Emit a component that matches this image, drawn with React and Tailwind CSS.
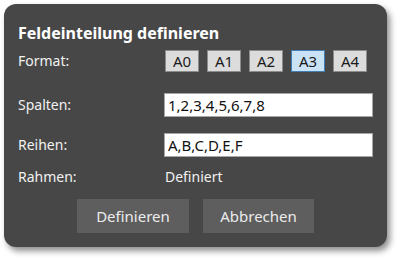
import React, { useState } from 'react'

const formats = ['A0', 'A1', 'A2', 'A3', 'A4']

export default function App() {
  const [format, setFormat] = useState('A3')
  const [spalten, setSpalten] = useState('1,2,3,4,5,6,7,8')
  const [reihen, setReihen] = useState('A,B,C,D,E,F')

  return (
    <div className="w-[400px] h-[260px] bg-white pt-[4px] pl-[4px]" style={{ fontFamily: '"Noto Sans", "Open Sans", sans-serif' }}>
      <div className="w-[383px] h-[243px] rounded-[12px] bg-[#474747] shadow-[3px_4px_6px_rgba(0,0,0,0.45)] pl-[14px] pr-[14px] pt-[18px] text-[#f2f2f2]">
        {/* Title */}
        <h1 className="text-[16px] leading-[22px] font-bold text-white">Feldeinteilung definieren</h1>

        {/* Format */}
        <div className="flex items-center mt-[6px] h-[22px]">
          <div className="w-[147px] text-[14px] leading-[18px]">Format:</div>
          <div className="flex gap-[8px]">
            {formats.map(f => (
              <button
                key={f}
                onClick={() => setFormat(f)}
                className={`w-[34px] h-[22px] border text-[15px] leading-[18px] text-[#1a1a1a] flex items-center justify-center ${f === format ? 'bg-[#c9e2f5] border-[#3f7fb5]' : 'bg-[#dcdcdc] border-[#8c8c8c]'}`}
              >
                {f}
              </button>
            ))}
          </div>
        </div>

        {/* Spalten */}
        <div className="flex items-center mt-[21px] h-[24px]">
          <div className="w-[147px] text-[14px] leading-[18px]">Spalten:</div>
          <input
            value={spalten}
            onChange={e => setSpalten(e.target.value)}
            className="w-[209px] h-[24px] bg-white border border-[#a6a6a6] px-[3px] text-[15px] text-[#111] outline-none"
          />
        </div>

        {/* Reihen */}
        <div className="flex items-center mt-[16px] h-[24px]">
          <div className="w-[147px] text-[14px] leading-[18px]">Reihen:</div>
          <input
            value={reihen}
            onChange={e => setReihen(e.target.value)}
            className="w-[209px] h-[24px] bg-white border border-[#a6a6a6] px-[3px] text-[15px] text-[#111] outline-none"
          />
        </div>

        {/* Rahmen */}
        <div className="flex items-center mt-[10px] h-[20px]">
          <div className="w-[147px] text-[14px] leading-[18px]">Rahmen:</div>
          <div className="text-[14px] leading-[18px]">Definiert</div>
        </div>

        {/* Actions */}
        <div className="flex justify-center gap-[14px] mt-[12px]">
          <button className="w-[112px] h-[34px] bg-[#5e5e5e] text-[15px] text-[#ececec]">Definieren</button>
          <button className="w-[111px] h-[34px] bg-[#5e5e5e] text-[15px] text-[#ececec]">Abbrechen</button>
        </div>
      </div>
    </div>
  )
}
